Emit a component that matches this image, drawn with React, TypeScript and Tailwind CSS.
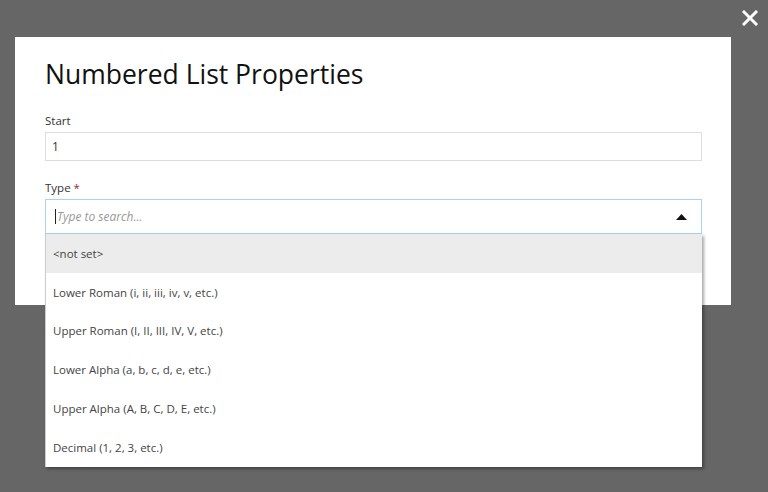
const options = [
  '<not set>',
  'Lower Roman (i, ii, iii, iv, v, etc.)',
  'Upper Roman (I, II, III, IV, V, etc.)',
  'Lower Alpha (a, b, c, d, e, etc.)',
  'Upper Alpha (A, B, C, D, E, etc.)',
  'Decimal (1, 2, 3, etc.)',
];

export default function App() {
  return (
    <div className="relative h-[492px] w-[768px] overflow-hidden bg-[#666666] pl-[15px] pt-[37px] font-['Open_Sans',sans-serif]">
      <button className="absolute right-[8px] top-[8px] flex h-[20px] w-[20px] items-center justify-center">
        <svg width="16" height="16" viewBox="0 0 16 16">
          <path d="M2 2 L14 14 M14 2 L2 14" stroke="#ffffff" strokeWidth="3" strokeLinecap="square" />
        </svg>
      </button>

      <div className="h-[268px] w-[716px] bg-white pl-[30px] pr-[29px] pt-[19px]">
        <h1 className="text-[26.5px] font-normal leading-[36px] text-[#111]">Numbered List Properties</h1>

        <div className="mt-[21px]">
          <label className="block text-[11.5px] leading-[16px] text-[#333]">Start</label>
          <div className="mt-[3px] flex h-[29px] items-center border border-[#dddddd] px-[6px] text-[12px] text-[#333]">
            1
          </div>
        </div>

        <div className="mt-[19px]">
          <label className="block text-[11.5px] leading-[16px] text-[#333]">
            Type <span className="text-[#a3262a]">*</span>
          </label>
          <div className="relative mt-[3px]">
            <div className="flex h-[35px] items-center border border-[#a6d3f7] pl-[9px] pr-[14px]">
              <span className="h-[15px] w-px bg-[#222]" />
              <span className="ml-px flex-1 text-[12px] italic text-[#999]">Type to search...</span>
              <svg width="11" height="6" viewBox="0 0 11 6">
                <path d="M0 6 L5.5 0 L11 6 Z" fill="#111" />
              </svg>
            </div>
            <ul className="absolute left-0 right-0 top-[35px] z-10 border-l border-[#cccccc] bg-white shadow-[2px_2px_3px_rgba(0,0,0,0.35)]">
              {options.map((o, i) => (
                <li
                  key={o}
                  className={`flex h-[38.8px] items-center px-[7px] text-[11.5px] text-[#444] ${i === 0 ? 'bg-[#ececec]' : ''}`}
                >
                  {o}
                </li>
              ))}
            </ul>
          </div>
        </div>
      </div>
    </div>
  );
}
